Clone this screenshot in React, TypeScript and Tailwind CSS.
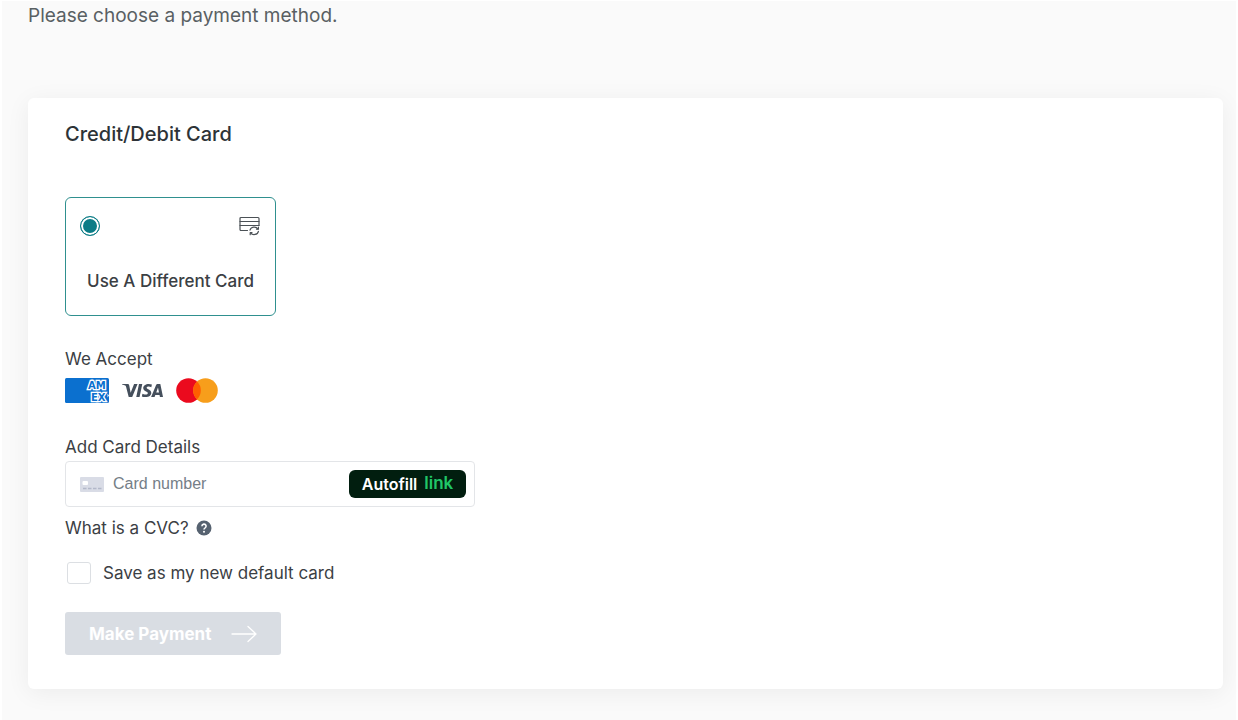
import { useState } from "react";
import { SiVisa } from "react-icons/si";

function CardSwapIcon() {
  return (
    <svg
      viewBox="0 0 22 20"
      className="h-5 w-[22px]"
      fill="none"
      stroke="#4b5156"
      strokeWidth="1.2"
      strokeLinecap="round"
      strokeLinejoin="round"
      aria-hidden="true"
    >
      <path d="M8.500 14.500H2A1 1 0 0 1 1 13.500V2.500A1 1 0 0 1 2 1.500H19A1 1 0 0 1 20 2.500V9.500" />
      <path d="M1 5.500H20M1 9.500H20" />
      <path d="M11 14.200A4.300 3.900 0 0 1 18.900 13M19.400 15.300A4.300 3.900 0 0 1 11.600 16.800" />
      <path d="M19.400 11.200V13.200H17.500M11.200 18.700V16.700H13" />
    </svg>
  );
}

function AmexLogo() {
  return (
    <svg viewBox="0 0 44 25" className="h-[25px] w-11" role="img" aria-label="American Express">
      <clipPath id="amex-box">
        <rect width="44" height="25" rx="1.5" />
      </clipPath>
      <g clipPath="url(#amex-box)">
        <rect width="44" height="25" fill="#0b70cf" />
        <path d="M42.500 15.500L44 17.500L42.500 19.500" fill="#fff" />
        <g
          fill="#0b70cf"
          stroke="#fff"
          strokeWidth="2.6"
          paintOrder="stroke"
          fontFamily="DejaVu Sans, sans-serif"
          fontWeight="700"
          fontSize="10"
        >
          <text x="23" y="11">AM</text>
          <text x="26" y="22.6">EX</text>
        </g>
      </g>
    </svg>
  );
}

function MastercardLogo() {
  return (
    <svg viewBox="0 0 42 25" className="h-[25px] w-[42px]" role="img" aria-label="Mastercard">
      <circle cx="12.5" cy="12.5" r="12.3" fill="#eb0a1e" />
      <circle cx="29.5" cy="12.5" r="12.3" fill="#f79e1b" />
      <path d="M21 3.600a12.300 12.300 0 0 1 0 17.800a12.300 12.300 0 0 1 0-17.800z" fill="#ff5f00" />
    </svg>
  );
}

function CardGlyph() {
  return (
    <svg viewBox="0 0 24 15" className="h-[15px] w-6 shrink-0" aria-hidden="true">
      <rect width="24" height="15" rx="1" fill="#d9dce6" />
      <rect x="2.5" y="4" width="5.5" height="4" rx="1" fill="#fff" />
      <path d="M3 11.500H22" stroke="#b3b8c9" strokeWidth="1.5" strokeDasharray="3.5 1.5" />
    </svg>
  );
}

function HelpIcon() {
  return (
    <svg viewBox="0 0 16 16" className="h-4 w-4" aria-hidden="true">
      <circle cx="8" cy="8" r="7.5" fill="#566270" />
      <path
        d="M5.900 6.200A2.100 2.100 0 1 1 8.900 8.100C8.200 8.500 8 8.800 8 9.500"
        fill="none"
        stroke="#fff"
        strokeWidth="1.6"
      />
      <circle cx="8" cy="11.7" r="1" fill="#fff" />
    </svg>
  );
}

function ArrowIcon() {
  return (
    <svg
      viewBox="0 0 26 18"
      className="h-[18px] w-[26px]"
      fill="none"
      stroke="#fff"
      strokeWidth="1.3"
      strokeLinecap="round"
      strokeLinejoin="round"
      aria-hidden="true"
    >
      <path d="M1 9H25M17 1.500L25 9L17 16.500" />
    </svg>
  );
}

export default function App() {
  const [cardNumber, setCardNumber] = useState("");
  const [saveDefault, setSaveDefault] = useState(false);

  return (
    <main className="min-h-screen border-x-2 border-t border-white bg-[#fafafa] pr-[13px] pb-[31px] pl-[26px] font-['Inter',sans-serif] text-[17px] leading-6 text-[#3b4044]">
      <p className="text-[19px] leading-[30px] text-[#596063]">Please choose a payment method.</p>

      <section className="mt-[67px] rounded-md bg-white pt-6 pr-9 pb-[34px] pl-[37px] shadow-[0_4px_24px_rgba(0,0,0,0.06)]">
        <h2 className="text-xl leading-6 font-medium text-[#2d3337]">Credit/Debit Card</h2>

        <label className="mt-[51px] flex h-[119px] w-[211px] flex-col justify-between rounded-md border border-[#2f908f] px-3.5 pt-[18px] pb-[22px]">
          <span className="flex items-center justify-between">
            <input
              type="radio"
              name="payment-card"
              defaultChecked
              className="h-5 w-5 appearance-none rounded-full border border-[#0b7c86] bg-[#0b7c86] shadow-[inset_0_0_0_2px_#fff]"
            />
            <CardSwapIcon />
          </span>
          <span className="text-center font-medium whitespace-nowrap">Use A Different Card</span>
        </label>

        <p className="mt-[31px]">We Accept</p>
        <div className="mt-[7px] flex h-[25px] items-center">
          <AmexLogo />
          <SiVisa className="ml-[13px] h-[41px] w-[41px] text-[#454f5c]" title="Visa" />
          <span className="ml-[13px]">
            <MastercardLogo />
          </span>
        </div>

        <label htmlFor="card-number" className="mt-8 block">
          Add Card Details
        </label>
        <div className="mt-0.5 flex h-[46px] w-full max-w-[410px] items-center rounded-[4px] border border-[#e3e5e8] pr-2 pl-3.5">
          <CardGlyph />
          <input
            id="card-number"
            type="text"
            inputMode="numeric"
            placeholder="Card number"
            value={cardNumber}
            onChange={(event) => setCardNumber(event.target.value)}
            className="ml-[9px] min-w-0 flex-1 bg-transparent font-['Liberation_Sans',sans-serif] text-base outline-none placeholder:text-[#757e87]"
          />
          <button
            type="button"
            className="flex h-7 w-[117px] items-center justify-center gap-[7px] rounded-md bg-[#011e0f] text-base font-semibold text-white"
          >
            Autofill
            <span className="text-[17px] text-[#20c768]">link</span>
          </button>
        </div>

        <p className="mt-[9px] flex items-center gap-[7px]">
          What is a CVC?
          <button type="button" aria-label="What is a CVC?">
            <HelpIcon />
          </button>
        </p>

        <label className="mt-[21px] flex items-center gap-3 pl-0.5">
          <input
            type="checkbox"
            checked={saveDefault}
            onChange={(event) => setSaveDefault(event.target.checked)}
            className="h-[22px] w-6 appearance-none rounded-[3px] border border-[#dcdfe3] bg-white checked:bg-[#0b7c86]"
          />
          Save as my new default card
        </label>

        <button
          type="button"
          disabled
          className="mt-[27px] flex h-[43px] w-[216px] items-center justify-between rounded-[3px] bg-[#d9dde3] px-6 font-bold text-white"
        >
          Make Payment
          <ArrowIcon />
        </button>
      </section>
    </main>
  );
}
